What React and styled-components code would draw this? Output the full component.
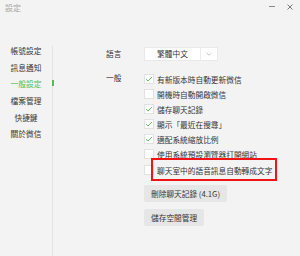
import React from "react";
import styled, { createGlobalStyle } from "styled-components";

const GlobalStyle = createGlobalStyle`
  html, body {
    margin: 0;
    padding: 0;
    background: #f3f3f3;
  }
  body {
    width: 300px;
    height: 256px;
    overflow: hidden;
    font-family: "Noto Sans CJK TC", "Noto Sans CJK SC", "Noto Sans", sans-serif;
    color: #353535;
  }
  * { box-sizing: border-box; }
`;

const Window = styled.div`
  width: 300px;
  height: 256px;
  display: flex;
  flex-direction: column;
  background: #f3f3f3;
`;

const TitleBar = styled.div`
  height: 16px;
  display: flex;
  align-items: center;
  padding: 0 7px 0 5px;
`;

const Title = styled.span`
  font-size: 8px;
  line-height: 10px;
  color: #a6a6a6;
`;

const Controls = styled.div`
  margin-left: auto;
  align-self: flex-start;
  margin-top: 4px;
  display: flex;
  align-items: center;
  gap: 12px;
  height: 5px;
`;

const Body = styled.div`
  flex: 1;
  margin-top: 30px;
  display: grid;
  grid-template-columns: 53px 1fr;
`;

const Sidebar = styled.nav`
  border-right: 1px solid #e3e3e3;
  display: flex;
  flex-direction: column;
`;

const NavItem = styled.div`
  position: relative;
  height: 16.65px;
  font-size: 7.7px;
  line-height: 10px;
  text-align: center;
  color: ${(p) => (p.$active ? "#4cbf57" : "#353535")};

  &::after {
    content: "";
    display: ${(p) => (p.$active ? "block" : "none")};
    position: absolute;
    right: -1.5px;
    top: 1px;
    width: 2px;
    height: 6px;
    background: #4cbf57;
  }
`;

const Main = styled.main`
  padding: 1px 0 0 53px;
  display: grid;
  grid-template-columns: 38px 1fr;
  align-content: start;
`;

const Label = styled.div`
  font-size: 7.7px;
  line-height: ${(p) => p.$lh}px;
  margin-top: ${(p) => p.$mt || 0}px;
  color: #353535;
`;

const Section = styled.div`
  margin-top: ${(p) => p.$mt || 0}px;
  display: flex;
  flex-direction: column;
  align-items: flex-start;
`;

const Dropdown = styled.div`
  display: flex;
  height: 14px;
  background: #fff;
  border: 1px solid #e9e9e9;
`;

const DropText = styled.div`
  width: 55px;
  font-size: 7.7px;
  line-height: 12px;
  text-align: center;
  color: #353535;
`;

const DropArrow = styled.div`
  width: 17px;
  border-left: 1px solid #ececec;
  display: flex;
  align-items: center;
  justify-content: center;
`;

const OptionRow = styled.label`
  position: relative;
  height: ${(p) => (p.$tall ? 17 : 15)}px;
  display: flex;
  align-items: center;
  gap: 3px;
  font-size: 7.7px;
  color: #353535;
  white-space: nowrap;
`;

const Box = styled.span`
  width: 10px;
  height: 10px;
  background: #fff;
  border: 1px solid #e2e2e2;
  display: flex;
  align-items: center;
  justify-content: center;
  flex: none;
`;

const Highlight = styled.span`
  position: absolute;
  left: 7px;
  top: -3.5px;
  bottom: -2.5px;
  width: 126px;
  border: 2px solid #f01414;
  pointer-events: none;
`;

const Buttons = styled.div`
  margin-top: 6.5px;
  display: flex;
  flex-direction: column;
  align-items: flex-start;
  gap: 7px;
`;

const Button = styled.button`
  height: 17px;
  padding: 0 7px;
  border: none;
  border-radius: 2px;
  background: #e6e6e6;
  font-family: inherit;
  font-size: 7.7px;
  color: #353535;
  line-height: 17px;
`;

const Check = () => (
  <svg width="8" height="6" viewBox="0 0 8 6">
    <path d="M1 3.2 L3 5 L7 1" fill="none" stroke="#62c36a" strokeWidth="1" />
  </svg>
);

const options = [
  { text: "有新版本時自動更新微信", checked: true },
  { text: "開機時自動開啟微信", checked: false },
  { text: "儲存聊天記錄", checked: true },
  { text: "顯示「最近在搜尋」", checked: true },
  { text: "適配系統縮放比例", checked: true },
  { text: "使用系統預設瀏覽器打開網站", checked: false },
];

const nav = ["帳號設定", "訊息通知", "一般設定", "檔案管理", "快捷鍵", "關於微信"];

export default function App() {
  return (
    <>
      <GlobalStyle />
      <Window>
        <TitleBar>
          <Title>設定</Title>
          <Controls>
            <svg width="6" height="5" viewBox="0 0 6 5">
              <line x1="0" y1="2.5" x2="6" y2="2.5" stroke="#8a8a8a" strokeWidth="1" />
            </svg>
            <svg width="6" height="6" viewBox="0 0 6 6">
              <path d="M0.5 0.5 L5.5 5.5 M5.5 0.5 L0.5 5.5" stroke="#7a7a7a" strokeWidth="1" />
            </svg>
          </Controls>
        </TitleBar>
        <Body>
          <Sidebar>
            {nav.map((n) => (
              <NavItem key={n} $active={n === "一般設定"}>
                {n}
              </NavItem>
            ))}
          </Sidebar>
          <Main>
            <Label $lh={14}>語言</Label>
            <Section>
              <Dropdown>
                <DropText>繁體中文</DropText>
                <DropArrow>
                  <svg width="6" height="4" viewBox="0 0 6 4">
                    <path d="M0.5 0.8 L3 3.2 L5.5 0.8" fill="none" stroke="#b5b5b5" strokeWidth="0.8" />
                  </svg>
                </DropArrow>
              </Dropdown>
            </Section>
            <Label $lh={11} $mt={10.5}>一般</Label>
            <Section $mt={10.5}>
              {options.map((o) => (
                <OptionRow key={o.text}>
                  <Box>{o.checked && <Check />}</Box>
                  {o.text}
                </OptionRow>
              ))}
              <OptionRow $tall>
                <Box />
                聊天室中的語音訊息自動轉成文字
                <Highlight />
              </OptionRow>
              <Buttons>
                <Button>刪除聊天記錄 (4.1G)</Button>
                <Button>儲存空間管理</Button>
              </Buttons>
            </Section>
          </Main>
        </Body>
      </Window>
    </>
  );
}
